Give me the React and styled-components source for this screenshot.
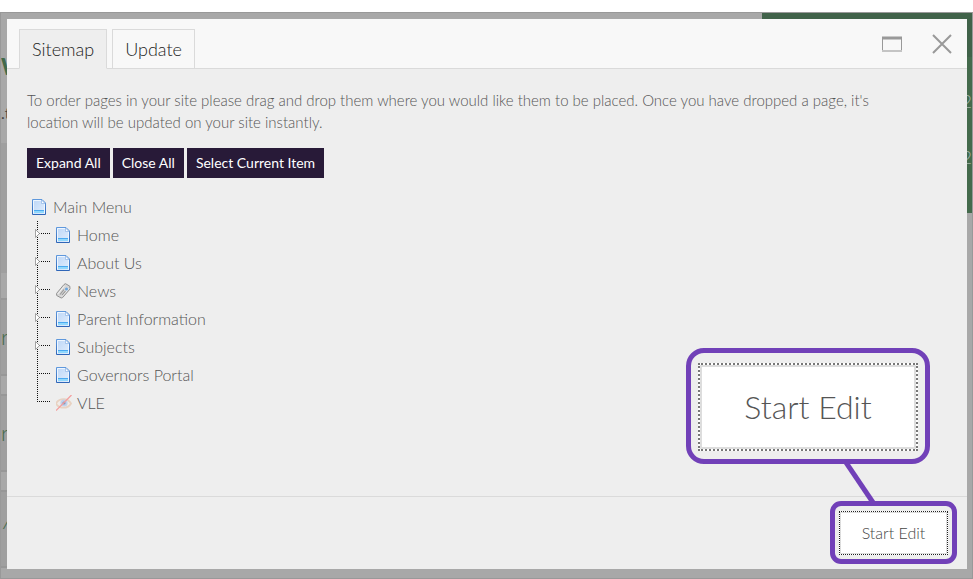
import React from 'react';
import styled, {createGlobalStyle} from 'styled-components';


const tree = [
  {label: 'Home', icon: 'page', children: true},
  {label: 'About Us', icon: 'page', children: true},
  {label: 'News', icon: 'tag', children: true},
  {label: 'Parent Information', icon: 'page', children: true},
  {label: 'Subjects', icon: 'page', children: true},
  {label: 'Governors Portal', icon: 'page'},
  {label: 'VLE', icon: 'hidden'},
];

const PageIcon = () => (
  <svg width="16" height="16" viewBox="0 0 16 16" aria-hidden="true">
    <defs>
      <linearGradient id="paper" x1="0" y1="0" x2="1" y2="1">
        <stop offset="0" stopColor="#bcd6f7" />
        <stop offset="1" stopColor="#e3effd" />
      </linearGradient>
      <linearGradient id="edge" x1="0" y1="0" x2="0" y2="1">
        <stop offset="0" stopColor="#5f98dc" />
        <stop offset="1" stopColor="#2f66b8" />
      </linearGradient>
    </defs>
    <path d="M.5 .5h9.500l3.500 3.500v11.500h-13z" fill="url(#paper)" stroke="url(#edge)" />
    <path d="M1.500 14.500v-13h8M12.500 5v9.500" fill="none" stroke="#eef6ff" />
    <path d="M9.500 1v3.500h3.500z" fill="#fff" stroke="#8db4e6" strokeWidth=".7" />
    <path d="M2 12h10v2h-10z" fill="#8fd8fd" />
    <path d="M2 11.500h10" stroke="#4aa9f0" />
  </svg>
);

const TagIcon = () => (
  <svg width="16" height="16" viewBox="0 0 16 16" aria-hidden="true">
    <path d="M.5 10.500l7.500-9 1.500-.8 4.300 2.500.2 2.800-7.300 8.500-1.500.5-4.500-2.500z" fill="#d5d5d5" stroke="#929292" />
    <path d="M2 10.800l6.500-8M6 13.300l7-8" stroke="#f4f4f4" />
    <path d="M4 11.500l4-5M6 12.200l3.500-4" stroke="#999" strokeWidth="1.200" />
    <circle cx="10.500" cy="6" r="1.500" fill="#6ba6de" />
  </svg>
);

const HiddenIcon = () => (
  <svg width="16" height="16" viewBox="0 0 16 16" aria-hidden="true">
    <path d="M0 8.500c3-5.800 12-5.800 15 0-3 5.600-12 5.600-15 0z" fill="#f1ece8" stroke="#e8d2c2" strokeWidth="1.800" />
    <circle cx="8" cy="8" r="3.600" fill="#bfd2ec" />
    <circle cx="8" cy="8" r="1.600" fill="#8497b8" />
    <path d="M0 15.500l15.500-15.500" stroke="#f49c9c" strokeWidth="1.200" />
  </svg>
);

const icons = {page: PageIcon, tag: TagIcon, hidden: HiddenIcon};

const Branch = ({last, expandable}) => (
  <svg width="16" height="28" viewBox="0 0 16 28" aria-hidden="true">
    <g stroke="#111" strokeDasharray="1 1" shapeRendering="crispEdges">
      <path d={last ? 'M2.500 0v13' : 'M2.500 0v28'} />
      <path d="M2 12.500h13" />
    </g>
    {expandable && <path d="M.5 8.500v8l4-4z" fill="#fff" stroke="#999" strokeWidth=".9" />}
  </svg>
);

const TreeNode = ({node, last}) => {
  const Icon = icons[node.icon];

  return (
    <StyledNode>
      <Branch last={last} expandable={node.children} />
      <Icon />
      <NodeLink href="#">{node.label}</NodeLink>
    </StyledNode>
  );
};

const App = () => (
  <>
    <GlobalStyle />
    <Stage>
      <Site aria-hidden="true">
        <SiteColumn>
          <SiteTop>
            <SiteLogo>W</SiteLogo>
            <SiteText>.t</SiteText>
          </SiteTop>
          <SiteHero />
          <SiteCard>r</SiteCard>
          <SiteCard>r</SiteCard>
          <SiteCard>^</SiteCard>
        </SiteColumn>
        <SiteContact>
          <SiteContactTop />
          <SiteDigit>2</SiteDigit>
          <SiteDigit>2</SiteDigit>
        </SiteContact>
      </Site>

      <Dialog role="dialog" aria-label="Sitemap">
        <DialogHeader>
          <Tabs role="tablist">
            <Tab role="tab" aria-selected="true" $active>Sitemap</Tab>
            <Tab role="tab" aria-selected="false">Update</Tab>
          </Tabs>
          <WindowActions>
            <IconButton aria-label="Maximise">
              <svg width="20" height="16" viewBox="0 0 20 16">
                <path d="M.5 1v14M19.500 1v14" stroke="#999" />
                <path d="M0 15h20" stroke="#c4c4c4" strokeWidth="2" />
                <path d="M0 2h20" stroke="#999" strokeWidth="3" />
              </svg>
            </IconButton>
            <IconButton aria-label="Close">
              <svg width="20" height="20" viewBox="0 0 20 20">
                <path d="M1 1l18 18M19 1l-18 18" stroke="#999" strokeWidth="2" />
              </svg>
            </IconButton>
          </WindowActions>
        </DialogHeader>

        <DialogBody>
          <Intro>
            To order pages in your site please drag and drop them where you would like them to be placed. Once you have dropped a page, it's location will be updated on your site instantly.
          </Intro>
          <Toolbar>
            <ToolButton>Expand All</ToolButton>
            <ToolButton>Close All</ToolButton>
            <ToolButton>Select Current Item</ToolButton>
          </Toolbar>
          <Root>
            <PageIcon />
            <NodeLink href="#">Main Menu</NodeLink>
          </Root>
          <Tree>
            {tree.map((node, i) => (
              <TreeNode key={node.label} node={node} last={i === tree.length - 1} />
            ))}
          </Tree>
        </DialogBody>

        <DialogFooter>
          <Highlight>
            <StartButton>Start Edit</StartButton>
          </Highlight>
        </DialogFooter>

        <Callout>
          <CalloutFrame>
            <CalloutLabel>Start Edit</CalloutLabel>
          </CalloutFrame>
          <svg width="244" height="40" viewBox="0 0 244 40">
            <path d="M159 -3l29 43" stroke="#7140b8" strokeWidth="5" />
          </svg>
        </Callout>
      </Dialog>
    </Stage>
  </>
);

const GlobalStyle = createGlobalStyle`
  * {
    box-sizing: border-box;
  }
  body {
    margin: 0;
    background: #fff;
    color: #555;
    font-family: Lato, 'Liberation Sans', sans-serif;
    font-size: 16px;
    font-weight: 300;
  }
  button {
    font: inherit;
    cursor: pointer;
  }
  svg {
    display: block;
    flex: none;
  }
`;

const Stage = styled.div`
  position: relative;
  display: flex;
  min-height: calc(100vh - 12px);
  margin-top: 12px;
  border: 1px solid #999;
  background: #a8a8a8;
  overflow: hidden;
`;

const Site = styled.div`
  display: flex;
  flex: 1;
  justify-content: space-between;
  align-items: flex-start;
`;

const SiteColumn = styled.div`
  width: 50%;
  color: #426a4a;
`;

const SiteTop = styled.div`
  height: 130px;
  padding-top: 40px;
  line-height: 28px;
`;

const SiteLogo = styled.div`
  font-size: 22px;
  font-weight: 900;
`;

const SiteText = styled.div`
  padding-top: 18px;
  color: #444;
  font-weight: 400;
`;

const SiteHero = styled.div`
  height: 130px;
  margin-bottom: 25px;
  background: #9f9f9f;
`;

const SiteCard = styled.div`
  height: 78px;
  margin-bottom: 18px;
  border: solid #979797;
  border-width: 2px 0;
  background: #9f9f9f;
  font-size: 22px;
  line-height: 74px;

  &:last-child {
    margin-bottom: 0;
  }
`;

const SiteContact = styled.div`
  width: 210px;
  height: 200px;
  background: #446a4c;
  color: #a5b5a8;
  font-size: 18px;
  text-align: right;
  line-height: 56px;
`;

const SiteContactTop = styled.div`
  height: 44px;
  margin-bottom: 16px;
  background: #406249;
`;

const SiteDigit = styled.div`
  height: 56px;
`;

const Dialog = styled.section`
  position: absolute;
  inset: 6px 5px 9px 6px;
  display: flex;
  flex-direction: column;
  background: #eee;
`;

const DialogHeader = styled.header`
  display: flex;
  justify-content: space-between;
  height: 50px;
  padding: 10px 15px 0 12px;
  border-bottom: 1px solid #dadada;
  background: #f8f8f8;
`;

const Tabs = styled.div`
  display: flex;
  gap: 5px;
`;

const Tab = styled.button`
  height: 40px;
  padding: 0 12px;
  border: 1px solid #dadada;
  border-bottom-color: ${({$active}) => $active ? '#eee' : '#dadada'};
  background: ${({$active}) => $active ? '#eee' : '#f8f8f8'};
  color: #222;
  font-size: 18px;
`;

const WindowActions = styled.div`
  display: flex;
  gap: 30px;
  height: 30px;
`;

const IconButton = styled.button`
  display: flex;
  align-items: center;
  padding: 0;
  border: 0;
  background: none;
`;

const DialogBody = styled.div`
  flex: 1;
  padding: 20px;
`;

const Intro = styled.p`
  max-width: 880px;
  margin: 0 0 15px;
  font-size: 15px;
  line-height: 22px;
`;

const Toolbar = styled.div`
  display: flex;
  gap: 3px;
  margin-bottom: 15px;
`;

const ToolButton = styled.button`
  height: 30px;
  padding: 0 9px 2px;
  border: 0;
  background: #281a38;
  color: #fff;
  font-size: 14px;
  font-weight: 400;
`;

const Root = styled.div`
  display: flex;
  align-items: center;
  gap: 5px;
  height: 28px;
  padding-left: 5px;
`;

const Tree = styled.ul`
  margin: 0;
  padding: 0 0 0 8px;
  list-style: none;
`;

const StyledNode = styled.li`
  display: flex;
  align-items: center;
  gap: 5px;
  height: 28px;
`;

const NodeLink = styled.a`
  padding-bottom: 2px;
  color: #555;
  text-decoration: none;
`;

const DialogFooter = styled.footer`
  display: flex;
  justify-content: flex-end;
  padding: 4px 10px 5px;
  border-top: 1px solid #dadada;
`;

const Highlight = styled.div`
  padding: 5px 4px 4px;
  border: 5px solid #7140b8;
  border-radius: 11px;
`;

const StartButton = styled.button`
  display: block;
  width: 109px;
  height: 44px;
  padding: 0 0 2px;
  border: 1px dotted #222;
  background: #fff;
  box-shadow: inset 0 0 0 1px #ddd;
  color: #444;
`;

const Callout = styled.div`
  position: absolute;
  right: 37px;
  bottom: 65px;
`;

const CalloutFrame = styled.div`
  width: 244px;
  padding: 10px 7px 8px;
  border: 5px solid #7140b8;
  border-radius: 18px;
  background: #eee;
`;

const CalloutLabel = styled.div`
  height: 88px;
  border: 2px dotted #777;
  background: #fff;
  box-shadow: inset 0 0 0 2px #ddd;
  color: #555;
  font-size: 32px;
  line-height: 84px;
  text-align: center;
`;

export default App;
